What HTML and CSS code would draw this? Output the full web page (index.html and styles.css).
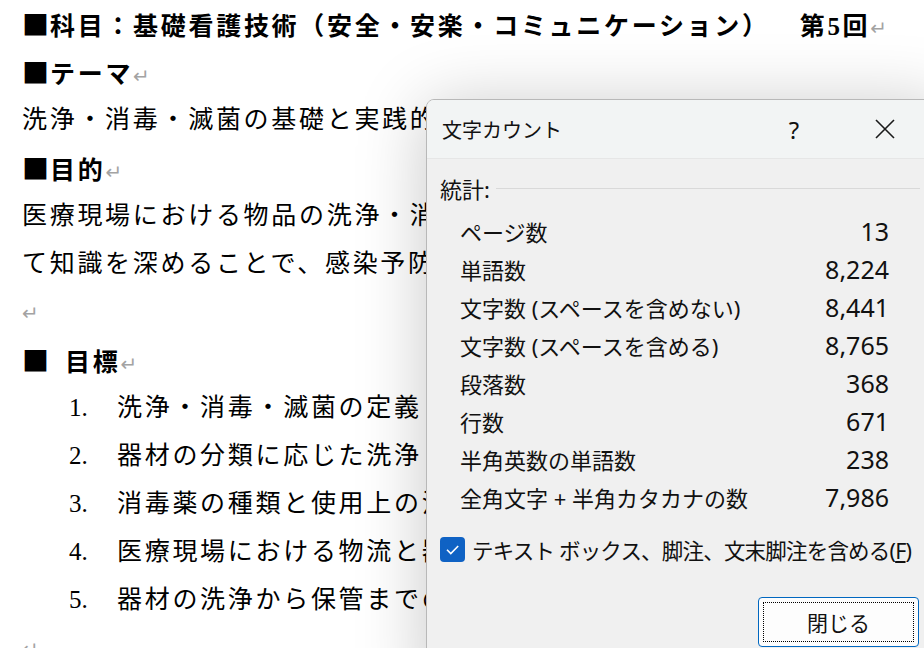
FILE: index.html
```html
<!DOCTYPE html>
<html lang="ja">
<head>
    <meta charset="UTF-8">
    <title>文字カウント</title>
    <link rel="stylesheet" href="styles.css">
</head>
<body>

    <!-- Document page -->
    <div class="doc">
        <div class="line bold"><span class="sq">■</span>科目：基礎看護技術（安全・安楽・コミュニケーション）<span class="round">第5回</span><span class="ret">↵</span></div>
        <div class="line bold"><span class="sq">■</span>テーマ<span class="ret">↵</span></div>
        <div class="line under">洗浄・消毒・滅菌の基礎と実践的</div>
        <div class="line bold"><span class="sq">■</span>目的<span class="ret">↵</span></div>
        <div class="line under">医療現場における物品の洗浄・消</div>
        <div class="line under">て知識を深めることで、感染予防</div>
        <div class="line"><span class="ret">↵</span></div>
        <div class="line bold"><span class="sq gap">■</span>目標<span class="ret">↵</span></div>
        <div class="line under item"><span class="num">1.</span>洗浄・消毒・滅菌の定義と</div>
        <div class="line under item"><span class="num">2.</span>器材の分類に応じた洗浄・</div>
        <div class="line under item"><span class="num">3.</span>消毒薬の種類と使用上の注</div>
        <div class="line under item"><span class="num">4.</span>医療現場における物流と器</div>
        <div class="line under item"><span class="num">5.</span>器材の洗浄から保管までの</div>
        <div class="line"><span class="ret">↵</span></div>
    </div>

    <!-- Word count dialog -->
    <div class="dialog">
        <div class="titlebar">
            <div class="title">文字カウント</div>
            <div class="help">?</div>
            <div class="close">
                <svg width="20" height="20" viewBox="0 0 20 20">
                    <path d="M1 1 L19 19 M19 1 L1 19" stroke="#1a1a1a" stroke-width="1.6" fill="none"/>
                </svg>
            </div>
        </div>

        <div class="dialog-body">
            <div class="group-head">
                <span>統計:</span>
                <div class="rule"></div>
            </div>

            <div class="stats">
                <div class="stat"><span>ページ数</span><span class="val">13</span></div>
                <div class="stat"><span>単語数</span><span class="val">8,224</span></div>
                <div class="stat"><span>文字数 (スペースを含めない)</span><span class="val">8,441</span></div>
                <div class="stat"><span>文字数 (スペースを含める)</span><span class="val">8,765</span></div>
                <div class="stat"><span>段落数</span><span class="val">368</span></div>
                <div class="stat"><span>行数</span><span class="val">671</span></div>
                <div class="stat"><span>半角英数の単語数</span><span class="val">238</span></div>
                <div class="stat"><span>全角文字 + 半角カタカナの数</span><span class="val">7,986</span></div>
            </div>

            <div class="check-row">
                <div class="checkbox">
                    <svg width="25" height="25" viewBox="0 0 25 25">
                        <path d="M7 12.8 L10.8 16.6 L18.2 9" stroke="#fff" stroke-width="1.6" fill="none"/>
                    </svg>
                </div>
                <span class="check-label">テキスト ボックス、脚注、文末脚注を含める(<u>F</u>)</span>
            </div>

            <div class="actions">
                <button class="btn"><span class="focus">閉じる</span></button>
            </div>
        </div>
    </div>

</body>
</html>
```

FILE: styles.css
```css
body {
    margin: 0;
    height: 648px;
    overflow: hidden;
    position: relative;
    background-color: #fff;
    font-family: "Liberation Serif", "Noto Sans CJK JP", serif;
}

/* Document */
.doc {
    padding-left: 22px;
    font-size: 25px;
    line-height: 48px;
    letter-spacing: 2.7px;
    white-space: nowrap;
    color: #000;
}

.line {
    height: 48px;
}

/* lines that run in under the dialog */
.under {
    width: 404px;
    overflow: hidden;
}

.bold {
    font-weight: bold;
}

.sq {
    font-family: "Noto Sans CJK JP", sans-serif;
    font-size: 27px;
    letter-spacing: 0;
    margin-right: 1px;
}

.sq.gap {
    margin-right: 16px;
}

.round {
    margin-left: 30px;
}

.ret {
    color: #a3a3a3;
    font-family: "DejaVu Sans", sans-serif;
    font-weight: normal;
    font-size: 20px;
    letter-spacing: 0;
}

.item {
    padding-left: 47px;
    width: 357px;
}

.item .num {
    display: inline-block;
    width: 48px;
    letter-spacing: 0;
}

/* Dialog */
.dialog {
    position: absolute;
    left: 426px;
    top: 99px;
    width: 520px;
    height: 600px;
    background-color: #f0f0f0;
    border: 1px solid #b8b8b8;
    border-radius: 8px;
    box-shadow: 0 6px 70px rgba(0, 0, 0, 0.22);
    font-family: "Noto Sans", "Noto Sans CJK JP", sans-serif;
    color: #111;
    overflow: hidden;
}

.titlebar {
    height: 58px;
    display: flex;
    align-items: center;
    padding-left: 15px;
    padding-right: 32px;
    background-color: #f2f4f4;
    border-bottom: 1px solid #e6e6e6;
}

.title {
    flex: 1;
    font-size: 20px;
}

.help {
    width: 40px;
    text-align: center;
    font-size: 24px;
    margin-right: 41px;
}

.close {
    width: 60px;
    display: flex;
    justify-content: center;
}

.dialog-body {
    padding-left: 13px;
}

.group-head {
    height: 40px;
    margin-top: 9px;
    display: flex;
    align-items: center;
    font-size: 22px;
}

.group-head .rule {
    flex: 1;
    height: 1px;
    background-color: #d9d9d9;
    margin-left: 6px;
    margin-right: 27px;
}

.stats {
    margin-top: 4px;
    padding-left: 20px;
    width: 429px;
}

.stat {
    height: 38px;
    display: flex;
    align-items: center;
    justify-content: space-between;
    font-size: 22px;
}

.stat .val {
    font-size: 25px;
}

.check-row {
    margin-top: 16px;
    height: 34px;
    display: flex;
    align-items: center;
}

.checkbox {
    width: 25px;
    height: 25px;
    border-radius: 4px;
    background-color: #0f62c4;
    margin-right: 7px;
}

.check-label {
    font-size: 21.5px;
    letter-spacing: -0.8px;
}

.actions {
    margin-top: 31px;
    padding-left: 318px;
}

.btn {
    width: 161px;
    height: 50px;
    padding: 4px;
    background-color: #fdfdfd;
    border: 1px solid #0067c0;
    border-radius: 4px;
    font-family: "Noto Sans CJK JP", sans-serif;
    font-size: 21px;
    color: #111;
}

.btn .focus {
    display: flex;
    align-items: center;
    justify-content: center;
    height: 100%;
    border: 1px dotted #000;
    box-sizing: border-box;
}
```
